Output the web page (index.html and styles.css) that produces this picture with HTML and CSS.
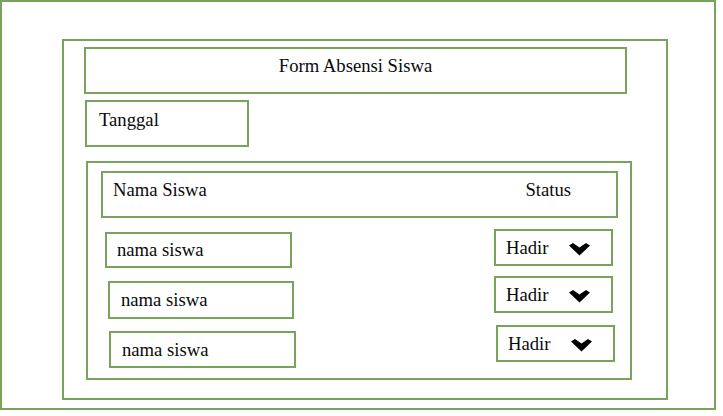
FILE: index.html
```html
<!DOCTYPE html>
<html lang="id">
<head>
<meta charset="utf-8">
<title>Form Absensi Siswa</title>
<link rel="stylesheet" href="styles.css">
</head>
<body>
<div class="screen">
  <div class="form">
    <div class="title">Form Absensi Siswa</div>
    <div class="date">Tanggal</div>
    <div class="table">
      <div class="thead"><span>Nama Siswa</span><span>Status</span></div>
      <div class="row row-1">
        <div class="name">nama siswa</div>
        <div class="status">Hadir <svg class="chev" viewBox="0 0 21 13"><path d="M0 2.6 L4 0 L10.5 4.6 L17 0 L21 2.6 L10.5 12.6 Z"/></svg></div>
      </div>
      <div class="row row-2">
        <div class="name">nama siswa</div>
        <div class="status">Hadir <svg class="chev" viewBox="0 0 21 13"><path d="M0 2.6 L4 0 L10.5 4.6 L17 0 L21 2.6 L10.5 12.6 Z"/></svg></div>
      </div>
      <div class="row row-3">
        <div class="name">nama siswa</div>
        <div class="status">Hadir <svg class="chev" viewBox="0 0 21 13"><path d="M0 2.6 L4 0 L10.5 4.6 L17 0 L21 2.6 L10.5 12.6 Z"/></svg></div>
      </div>
    </div>
  </div>
</div>
</body>
</html>
```
FILE: styles.css
```css
* { box-sizing: border-box; }

body {
  margin: 0;
  background: #ffffff;
  font-family: "Liberation Serif", "Times New Roman", serif;
  font-size: 18.67px;
  color: #0a0a0a;
}

.screen {
  width: 716px;
  height: 410px;
  border: 2px solid #78a35a;
  padding: 37px 0 0 60px;
}

.form {
  width: 606px;
  height: 361px;
  border: 2px solid #78a35a;
  padding-top: 6px;
}

.title {
  margin-left: 20px;
  width: 543px;
  height: 47px;
  border: 2px solid #78a35a;
  text-align: center;
  padding-top: 6px;
}

.date {
  margin: 6px 0 0 21px;
  width: 164px;
  height: 47px;
  border: 2px solid #78a35a;
  padding: 7px 0 0 12px;
}

.table {
  margin: 14px 0 0 22px;
  width: 546px;
  border: 2px solid #78a35a;
  padding: 8px 0 10px 13px;
}

.thead {
  width: 517px;
  height: 47px;
  border: 2px solid #78a35a;
  display: flex;
  justify-content: space-between;
  padding: 6px 45px 0 10px;
}

.row {
  display: flex;
  justify-content: space-between;
  align-items: flex-start;
}

.name {
  width: 187px;
  height: 37px;
  border: 2px solid #78a35a;
  display: flex;
  align-items: center;
  padding-left: 11px;
}

.status {
  width: 119px;
  height: 37px;
  border: 2px solid #78a35a;
  display: flex;
  align-items: center;
  padding-left: 10px;
}

.chev {
  width: 21px;
  height: 13px;
  margin: 3px 0 0 21px;
  fill: #000000;
}

.row-1 { margin-top: 11px; padding: 0 17px 0 4px; }
.row-1 .name { margin-top: 3px; height: 36px; padding-left: 10px; }

.row-2 { margin-top: 8px; padding: 0 17px 0 7px; }
.row-2 .name { margin-top: 5px; height: 38px; width: 186px; }

.row-3 { margin-top: 6px; padding: 0 15px 0 8px; }
.row-3 .name { margin-top: 6px; }
```
